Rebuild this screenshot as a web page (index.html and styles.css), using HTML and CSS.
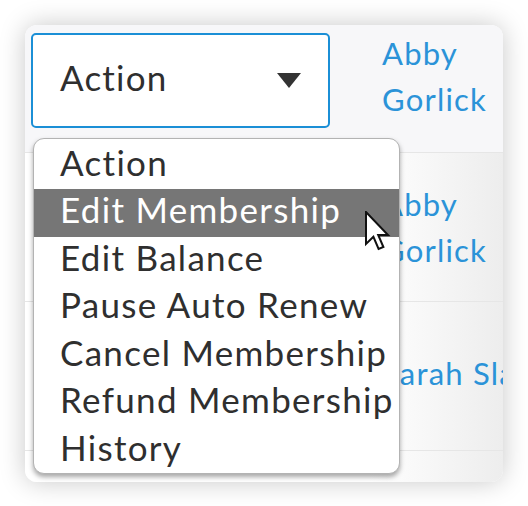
FILE: index.html
```html
<!DOCTYPE html>
<html lang="en">
<head>
    <meta charset="UTF-8">
    <meta name="viewport" content="width=device-width, initial-scale=1.0">
    <title>Members</title>
    <link rel="stylesheet" href="styles.css">
</head>
<body>
    <div class="card">
        <div class="row row-head">
            <div class="cell-action">
                <div class="select">
                    <span>Action</span>
                    <span class="caret"></span>
                </div>
            </div>
            <div class="cell-name"><a href="#">Abby<br>Gorlick</a></div>
        </div>
        <div class="row">
            <div class="cell-action"></div>
            <div class="cell-name"><a href="#">Abby<br>Gorlick</a></div>
        </div>
        <div class="row row-single">
            <div class="cell-action"></div>
            <div class="cell-name"><a href="#">Sarah Slater</a></div>
        </div>
        <div class="row row-last">
            <div class="cell-action"></div>
            <div class="cell-name"></div>
        </div>

        <ul class="menu">
            <li>Action</li>
            <li class="active">Edit Membership</li>
            <li>Edit Balance</li>
            <li>Pause Auto Renew</li>
            <li>Cancel Membership</li>
            <li>Refund Membership</li>
            <li>History</li>
        </ul>

        <svg class="cursor" width="26" height="40" viewBox="0 0 13 20">
            <path d="M0.5 0.5 L0.5 16.5 L4.2 12.9 L6.8 19 L9.2 18 L6.6 12 L11.5 12 Z" fill="#fff" stroke="#111" stroke-width="1" stroke-linejoin="miter"/>
        </svg>
    </div>
</body>
</html>
```

FILE: styles.css
```css
body {
    margin: 0;
    background: #ffffff;
    font-family: Lato, "Open Sans", sans-serif;
    color: #2f2f2f;
}

.card {
    position: relative;
    margin: 25px;
    width: 478px;
    height: 457px;
    border-radius: 12px;
    overflow: hidden;
    background: #ffffff;
    box-shadow: 0 0 26px rgba(0, 0, 0, 0.22);
}

.row {
    display: flex;
    height: 148px;
    border-bottom: 1px solid #e6e6e6;
    background: linear-gradient(to right, #ffffff 72%, #ededed);
}

.row-head {
    height: 127px;
    background: #f7f7f9;
}

.row-single .cell-name {
    padding-bottom: 6px;
}

.row-last {
    border-bottom: none;
}

.cell-action {
    flex-shrink: 0;
    box-sizing: border-box;
    width: 357px;
    padding: 8px 0 0 6px;
}

.cell-name {
    flex: 1;
    min-width: 0;
    display: flex;
    align-items: center;
    white-space: nowrap;
}

.row-head .cell-name {
    align-items: flex-start;
    padding-top: 5px;
}

.cell-name a {
    color: #2b93d8;
    text-decoration: none;
    font-size: 31px;
    line-height: 46px;
    letter-spacing: 1.2px;
}

.select {
    display: flex;
    align-items: center;
    justify-content: space-between;
    box-sizing: border-box;
    width: 299px;
    height: 95px;
    padding: 0 27px 7px 27px;
    border: 2px solid #1b8fd6;
    border-radius: 5px;
    background: #ffffff;
    font-size: 35px;
    letter-spacing: 1.2px;
}

.caret {
    margin-top: 7px;
    width: 0;
    height: 0;
    border-left: 12px solid transparent;
    border-right: 12px solid transparent;
    border-top: 15px solid #333;
}

.menu {
    position: absolute;
    left: 8px;
    top: 113px;
    width: 367px;
    height: 336px;
    margin: 0;
    padding: 2.5px 0 0;
    box-sizing: border-box;
    list-style: none;
    background: #ffffff;
    border: 1px solid #b3b3b3;
    border-radius: 11px;
    box-shadow: 0 3px 5px rgba(0, 0, 0, 0.35);
    overflow: hidden;
}

.menu li {
    height: 40px;
    line-height: 40px;
    padding: 0 0 7.6px 26px;
    font-size: 35px;
    letter-spacing: 1.3px;
    white-space: nowrap;
}

.menu li.active {
    background: #767676;
    color: #ffffff;
}

.cursor {
    position: absolute;
    left: 340px;
    top: 186px;
}
```
